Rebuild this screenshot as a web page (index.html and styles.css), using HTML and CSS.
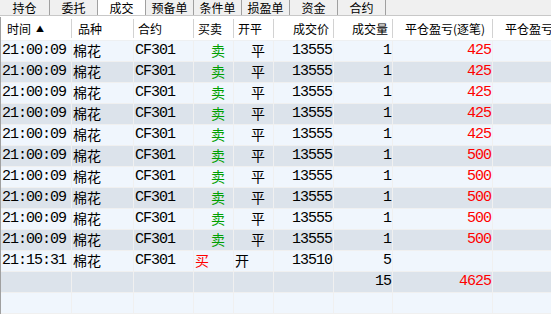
FILE: index.html
```html
<!DOCTYPE html>
<html>

<head>
    <title>成交</title>
    <meta charset="UTF-8">
    <link rel="stylesheet" href="styles.css">
</head>

<body>
    <div class="tabs">
        <div class="tab first">持仓</div>
        <div class="tab">委托</div>
        <div class="tab active">成交</div>
        <div class="tab">预备单</div>
        <div class="tab">条件单</div>
        <div class="tab">损盈单</div>
        <div class="tab">资金</div>
        <div class="tab">合约</div>
    </div>

    <div class="grid">
        <div class="head">
            <div class="h wide">时间<span class="sort">▲</span></div>
            <div class="h wide">品种</div>
            <div class="h">合约</div>
            <div class="h">买卖</div>
            <div class="h">开平</div>
            <div class="h num">成交价</div>
            <div class="h num">成交量</div>
            <div class="h num pnl">平仓盈亏(逐笔)</div>
            <div class="h num pnl">平仓盈亏(盯市)</div>
        </div>

        <div class="row"><div class="c mono">21:00:09</div><div class="c cn">棉花</div><div class="c mono">CF301</div><div class="c cn sell">卖</div><div class="c cn close">平</div><div class="c mono num">13555</div><div class="c mono num">1</div><div class="c mono num red">425</div><div class="c"></div></div>
        <div class="row"><div class="c mono">21:00:09</div><div class="c cn">棉花</div><div class="c mono">CF301</div><div class="c cn sell">卖</div><div class="c cn close">平</div><div class="c mono num">13555</div><div class="c mono num">1</div><div class="c mono num red">425</div><div class="c"></div></div>
        <div class="row"><div class="c mono">21:00:09</div><div class="c cn">棉花</div><div class="c mono">CF301</div><div class="c cn sell">卖</div><div class="c cn close">平</div><div class="c mono num">13555</div><div class="c mono num">1</div><div class="c mono num red">425</div><div class="c"></div></div>
        <div class="row"><div class="c mono">21:00:09</div><div class="c cn">棉花</div><div class="c mono">CF301</div><div class="c cn sell">卖</div><div class="c cn close">平</div><div class="c mono num">13555</div><div class="c mono num">1</div><div class="c mono num red">425</div><div class="c"></div></div>
        <div class="row"><div class="c mono">21:00:09</div><div class="c cn">棉花</div><div class="c mono">CF301</div><div class="c cn sell">卖</div><div class="c cn close">平</div><div class="c mono num">13555</div><div class="c mono num">1</div><div class="c mono num red">425</div><div class="c"></div></div>
        <div class="row"><div class="c mono">21:00:09</div><div class="c cn">棉花</div><div class="c mono">CF301</div><div class="c cn sell">卖</div><div class="c cn close">平</div><div class="c mono num">13555</div><div class="c mono num">1</div><div class="c mono num red">500</div><div class="c"></div></div>
        <div class="row"><div class="c mono">21:00:09</div><div class="c cn">棉花</div><div class="c mono">CF301</div><div class="c cn sell">卖</div><div class="c cn close">平</div><div class="c mono num">13555</div><div class="c mono num">1</div><div class="c mono num red">500</div><div class="c"></div></div>
        <div class="row"><div class="c mono">21:00:09</div><div class="c cn">棉花</div><div class="c mono">CF301</div><div class="c cn sell">卖</div><div class="c cn close">平</div><div class="c mono num">13555</div><div class="c mono num">1</div><div class="c mono num red">500</div><div class="c"></div></div>
        <div class="row"><div class="c mono">21:00:09</div><div class="c cn">棉花</div><div class="c mono">CF301</div><div class="c cn sell">卖</div><div class="c cn close">平</div><div class="c mono num">13555</div><div class="c mono num">1</div><div class="c mono num red">500</div><div class="c"></div></div>
        <div class="row"><div class="c mono">21:00:09</div><div class="c cn">棉花</div><div class="c mono">CF301</div><div class="c cn sell">卖</div><div class="c cn close">平</div><div class="c mono num">13555</div><div class="c mono num">1</div><div class="c mono num red">500</div><div class="c"></div></div>
        <div class="row"><div class="c mono">21:15:31</div><div class="c cn">棉花</div><div class="c mono">CF301</div><div class="c cn buy">买</div><div class="c cn">开</div><div class="c mono num">13510</div><div class="c mono num">5</div><div class="c"></div><div class="c"></div></div>

        <!-- totals -->
        <div class="row"><div class="c"></div><div class="c"></div><div class="c"></div><div class="c"></div><div class="c"></div><div class="c"></div><div class="c mono num">15</div><div class="c mono num red">4625</div><div class="c"></div></div>
        <div class="row"><div class="c"></div><div class="c"></div><div class="c"></div><div class="c"></div><div class="c"></div><div class="c"></div><div class="c"></div><div class="c"></div><div class="c"></div></div>
    </div>
</body>

</html>
```

FILE: styles.css
```css
body {
    margin: 0;
    width: 551px;
    height: 315px;
    overflow: hidden;
    background-color: #fff;
    color: #000;
    font-family: "Noto Sans CJK SC", "Liberation Sans", sans-serif;
}

/* Tab strip */

.tabs {
    display: flex;
    height: 15px;
    background-color: #f0f0f0;
    border-bottom: 1px solid #c8c8c8;
}

.tab {
    box-sizing: border-box;
    width: 48px;
    border-right: 1px solid #a0a0a0;
    font-size: 12px;
    line-height: 15px;
    text-align: center;
}

.tab.first {
    width: 50px;
}

.tab.active {
    background-color: #fff;
}

/* Grid */

.grid {
    margin-top: 1px;
    border-left: 1px solid #a0a0a0;
    width: 600px;
}

.head,
.row {
    display: grid;
    grid-template-columns: 71px 62px 60px 40px 40px 60px 59px 100px 100px;
}

.head {
    height: 24px;
    border-bottom: 1px solid #eef0f2;
    box-sizing: border-box;
}

.h {
    font-size: 12px;
    line-height: 23px;
    padding: 0 4px;
    white-space: nowrap;
    overflow: hidden;
    background: linear-gradient(#d2d2d2, #d2d2d2) no-repeat right center / 1px 19px;
}

.h.wide {
    padding-left: 6px;
}

.h.num {
    text-align: right;
    padding-right: 5px;
}

.h.pnl {
    padding-right: 8px;
}

.sort {
    font-size: 8px;
    margin-left: 5px;
    vertical-align: 2px;
}

.row {
    height: 21px;
    box-sizing: border-box;
    border-bottom: 1px solid #f0f0f0;
    background-color: #f0f6fd;
}

.row:nth-child(odd) {
    background-color: #dce3eb;
}

.c {
    box-sizing: border-box;
    border-right: 1px solid #f0f0f0;
    line-height: 20px;
    padding: 0 1px;
    white-space: nowrap;
    overflow: hidden;
}

.mono {
    font-family: "Liberation Mono", monospace;
    font-size: 15px;
    letter-spacing: -1px;
}

.cn {
    font-size: 14px;
    line-height: 18px;
}

.num {
    text-align: right;
}

.sell {
    color: #00a000;
    padding-left: 17px;
}

.buy {
    color: #ff0000;
}

.close {
    padding-left: 17px;
}

.red {
    color: #ff0000;
}
```
